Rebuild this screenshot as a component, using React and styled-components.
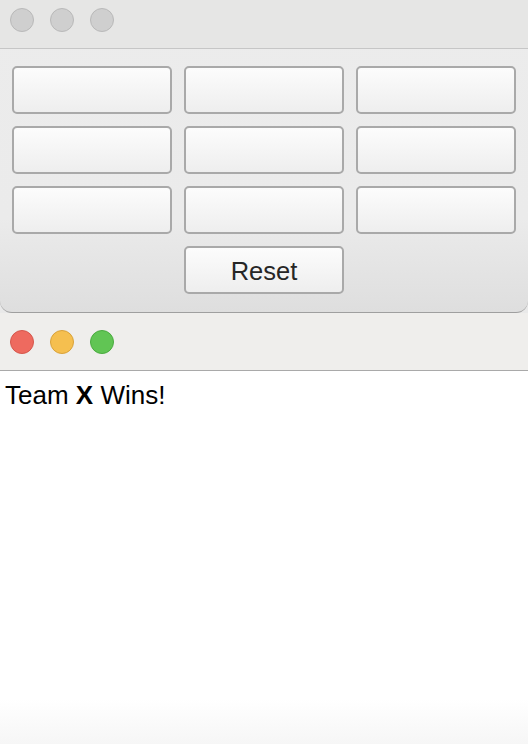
import React from "react";
import styled, { createGlobalStyle } from "styled-components";

const GlobalStyle = createGlobalStyle`
  html, body {
    margin: 0;
    padding: 0;
    background: #e9e9e9;
    font-family: "Liberation Sans", Arial, sans-serif;
  }
`;

const lights = {
  idle: { fill: "#cfcfcf", border: "#b9b9b9" },
  close: { fill: "#ee6a5f", border: "#d5574c" },
  minimize: { fill: "#f5bf4f", border: "#d9a23a" },
  zoom: { fill: "#61c554", border: "#4aab3f" },
};

export default function App() {
  const [cells, setCells] = React.useState(Array(9).fill(""));

  function handleReset() {
    setCells(Array(9).fill(""));
  }

  return (
    <>
      <GlobalStyle />
      <Page>
        <GameWindow>
          <TitleBar>
            <Light kind="idle" />
            <Light kind="idle" />
            <Light kind="idle" />
          </TitleBar>
          <Board>
            {cells.map((cell, key) => (
              <Cell key={key}>{cell}</Cell>
            ))}
            <ResetButton onClick={handleReset}>Reset</ResetButton>
          </Board>
        </GameWindow>
        <ResultWindow>
          <ResultTitleBar>
            <Light kind="close" />
            <Light kind="minimize" />
            <Light kind="zoom" />
          </ResultTitleBar>
          <ResultBody>
            <Message>
              Team <b>X</b> Wins!
            </Message>
          </ResultBody>
        </ResultWindow>
      </Page>
    </>
  );
}

const Page = styled.div`
  width: 528px;
  height: 744px;
  display: flex;
  flex-direction: column;
  overflow: hidden;
`;

const GameWindow = styled.div`
  display: flex;
  flex-direction: column;
  background: linear-gradient(#ececec 0%, #ebebeb 70%, #dedede 100%);
  border-bottom: 1px solid #9f9f9f;
  border-radius: 0 0 12px 12px;
`;

const TitleBar = styled.div`
  height: 40px;
  display: flex;
  align-items: center;
  gap: 16px;
  padding: 0 10px 8px 10px;
  background: #e6e6e5;
  border-bottom: 1px solid #c6c6c6;
`;

const Light = styled.span`
  box-sizing: border-box;
  width: 24px;
  height: 24px;
  border-radius: 50%;
  background: ${({ kind }) => lights[kind].fill};
  border: 1px solid ${({ kind }) => lights[kind].border};
  flex-shrink: 0;
`;

const Board = styled.div`
  display: grid;
  grid-template-columns: repeat(3, 160px);
  grid-auto-rows: 48px;
  gap: 12px;
  padding: 17px 12px 18px 12px;
`;

const Cell = styled.button`
  box-sizing: border-box;
  border: 2px solid #a9a9a9;
  border-radius: 5px;
  background: linear-gradient(#fcfcfc, #eeeeee);
  font-family: "Liberation Sans", Arial, sans-serif;
  font-size: 25px;
  color: #222;
  padding: 0;
  cursor: pointer;
`;

const ResetButton = styled(Cell)`
  grid-column: 2;
  color: #262626;
  font-size: 25.5px;
  padding-top: 2px;
`;

const ResultWindow = styled.div`
  flex: 1;
  display: flex;
  flex-direction: column;
`;

const ResultTitleBar = styled.div`
  height: 57px;
  display: flex;
  align-items: center;
  gap: 16px;
  padding-left: 10px;
  background: #efeeec;
  border-bottom: 1px solid #a9a9a9;
`;

const ResultBody = styled.div`
  flex: 1;
  background: linear-gradient(#ffffff 0%, #ffffff 88%, #f6f6f6 100%);
  padding: 9px 5px;
`;

const Message = styled.div`
  font-size: 26px;
  line-height: 30px;
  color: #000;
`;
